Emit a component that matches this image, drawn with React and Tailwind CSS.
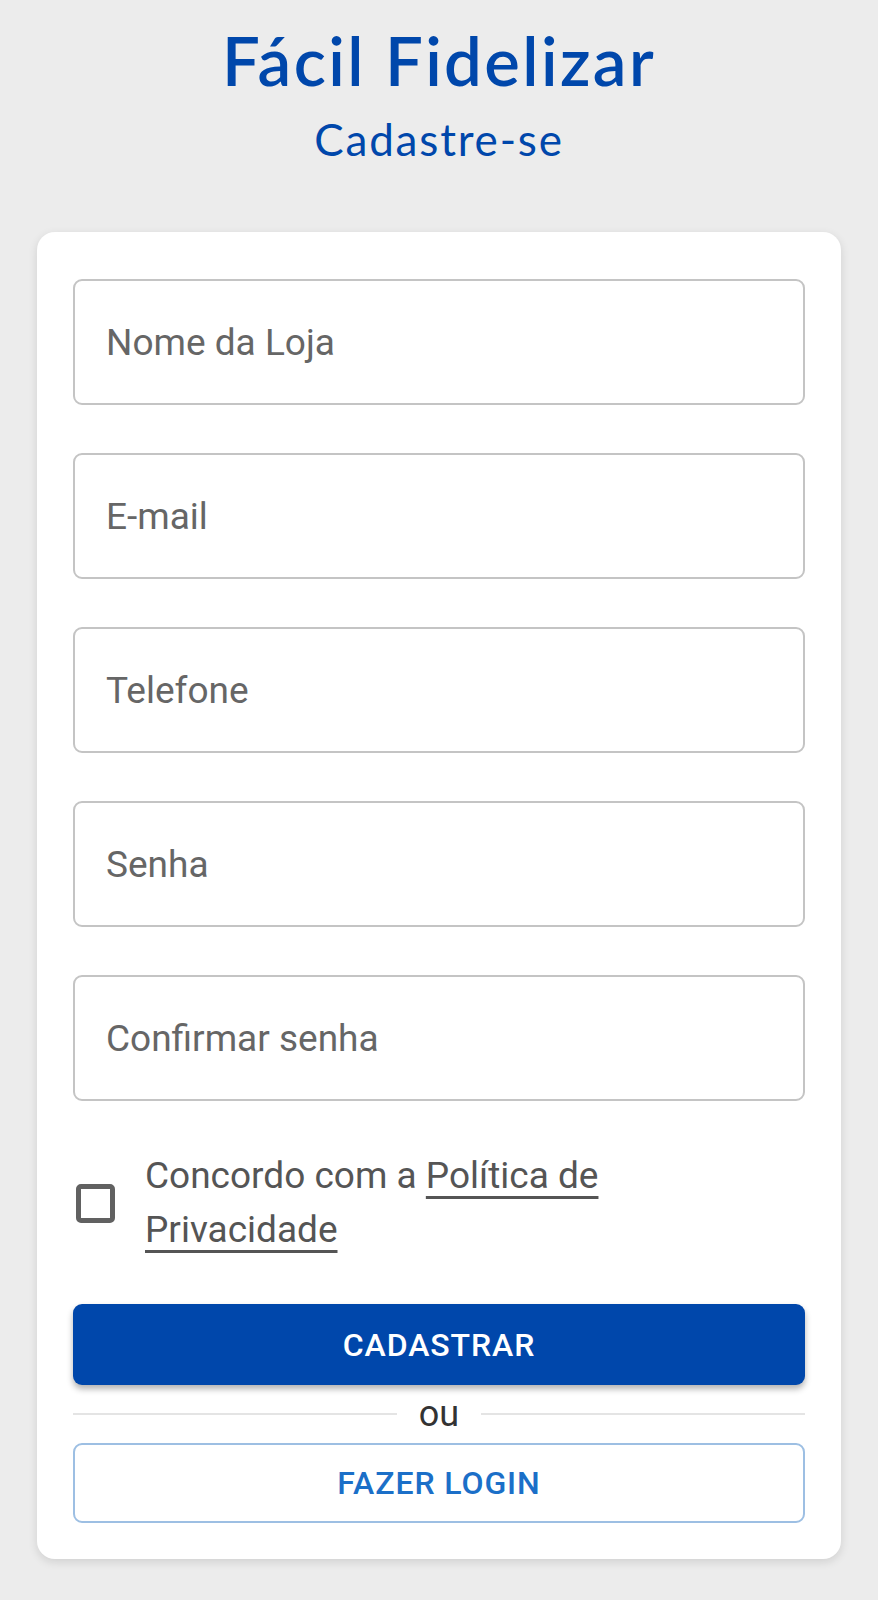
import React from 'react'

const fields = ['Nome da Loja', 'E-mail', 'Telefone', 'Senha', 'Confirmar senha']

export default function App() {
    return (
        <div className="min-h-[1600px] bg-[#ececec] font-['Roboto',sans-serif]">
            <header className="flex flex-col items-center pt-[20px] text-[#0047ab]">
                <h1 className="font-['Lato',sans-serif] text-[67px] font-semibold leading-[80px] tracking-[2.4px]">
                    Fácil Fidelizar
                </h1>
                <p className="mt-[14px] font-['Lato',sans-serif] text-[44px] leading-[50px] tracking-[1.8px]">
                    Cadastre-se
                </p>
            </header>

            <main className="mx-[37px] mt-[68px] rounded-[18px] bg-white px-[36px] pt-[47px] pb-[36px] shadow-[0_3px_10px_rgba(0,0,0,0.12)]">
                <form className="flex flex-col">
                    <div className="flex flex-col gap-[48px]">
                        {fields.map((label) => (
                            <input
                                key={label}
                                type="text"
                                placeholder={label}
                                className="h-[126px] w-full rounded-[9px] border-2 border-[#c4c4c4] px-[31px] text-[37px] text-[#333] outline-none placeholder:text-[#666]"
                            />
                        ))}
                    </div>

                    <label className="mt-[48px] flex items-center">
                        <span className="ml-[3px] h-[39px] w-[39px] shrink-0 rounded-[5px] border-[5px] border-[#616161]" />
                        <span className="ml-[30px] max-w-[480px] text-[37px] leading-[54px] text-[#555]">
                            Concordo com a{' '}
                            <a href="#" className="underline decoration-[3px] underline-offset-[8px]">
                                Política de Privacidade
                            </a>
                        </span>
                    </label>

                    <button
                        type="button"
                        className="mt-[47px] h-[81px] w-full rounded-[9px] bg-[#0047ab] text-[32px] font-medium tracking-[0.9px] text-white shadow-[0_4px_6px_rgba(0,0,0,0.3)]"
                    >
                        CADASTRAR
                    </button>

                    <div className="mt-[8px] flex items-center gap-[22px]">
                        <div className="h-[2px] flex-1 bg-[#e4e4e4]" />
                        <span className="text-[36px] leading-[42px] text-[#333]">ou</span>
                        <div className="h-[2px] flex-1 bg-[#e4e4e4]" />
                    </div>

                    <button
                        type="button"
                        className="mt-[8px] h-[80px] w-full rounded-[9px] border-2 border-[#9dbfe3] bg-white text-[32px] font-medium tracking-[0.9px] text-[#1b6fc8]"
                    >
                        FAZER LOGIN
                    </button>
                </form>
            </main>
        </div>
    )
}
